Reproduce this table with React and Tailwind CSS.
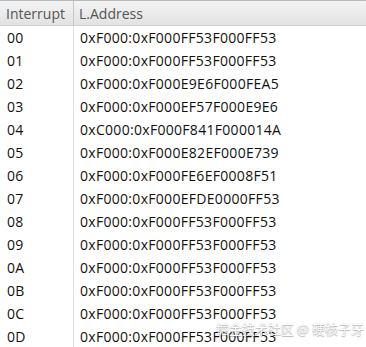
const rows = [
  ["00", "0xF000:0xF000FF53F000FF53"],
  ["01", "0xF000:0xF000FF53F000FF53"],
  ["02", "0xF000:0xF000E9E6F000FEA5"],
  ["03", "0xF000:0xF000EF57F000E9E6"],
  ["04", "0xC000:0xF000F841F000014A"],
  ["05", "0xF000:0xF000E82EF000E739"],
  ["06", "0xF000:0xF000FE6EF0008F51"],
  ["07", "0xF000:0xF000EFDE0000FF53"],
  ["08", "0xF000:0xF000FF53F000FF53"],
  ["09", "0xF000:0xF000FF53F000FF53"],
  ["0A", "0xF000:0xF000FF53F000FF53"],
  ["0B", "0xF000:0xF000FF53F000FF53"],
  ["0C", "0xF000:0xF000FF53F000FF53"],
  ["0D", "0xF000:0xF000FF53F000FF53"],
];

export default function App() {
  return (
    <div className="relative h-[347px] w-[366px] overflow-hidden bg-white font-['Open_Sans',sans-serif]">
      <div className="flex h-[26px] border-t border-b border-t-[#b8b8b8] border-b-[#d0d0d0] bg-gradient-to-b from-[#f4f4f4] to-[#e2e2e2] text-[14px] text-[#555555]">
        <div className="flex w-[74px] items-center border-r border-[#c8c8c8] pl-[6px]">Interrupt</div>
        <div className="flex items-center pl-[5px]">L.Address</div>
      </div>
      <div className="text-[14px] tracking-[0.3px] text-[#111111]">
        {rows.map(([irq, addr]) => (
          <div key={irq} className="flex h-[23px]">
            <div className="flex w-[74px] items-center border-r border-[#e2e2e2] pl-[7px]">{irq}</div>
            <div className="flex items-center pl-[6px]">{addr}</div>
          </div>
        ))}
      </div>
      <div className="absolute right-[2px] bottom-[9px] font-['Noto_Sans_CJK_SC',sans-serif] text-[13px] text-white [text-shadow:0_0_1px_rgba(0,0,0,0.35),0_1px_1px_rgba(0,0,0,0.25)]">
        掘金技术社区 @ 硬核子牙
      </div>
    </div>
  );
}
